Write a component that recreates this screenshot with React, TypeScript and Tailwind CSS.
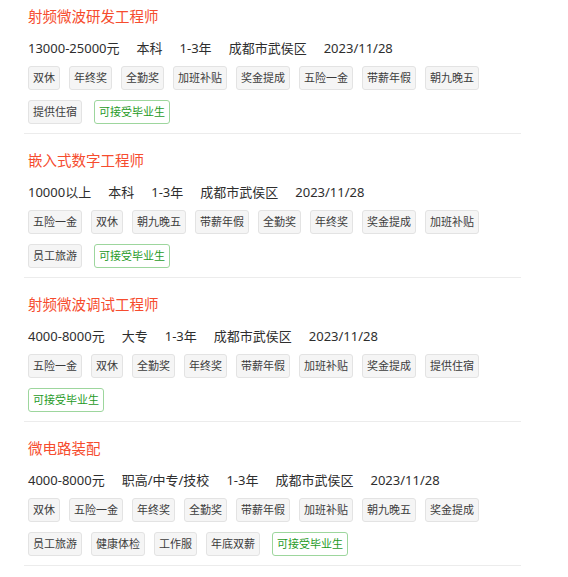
import React from "react";

type Job = {
  title: string;
  info: string[];
  tags: string[];
};

const jobs: Job[] = [
  {
    title: "射频微波研发工程师",
    info: ["13000-25000元", "本科", "1-3年", "成都市武侯区", "2023/11/28"],
    tags: ["双休", "年终奖", "全勤奖", "加班补贴", "奖金提成", "五险一金", "带薪年假", "朝九晚五", "提供住宿"],
  },
  {
    title: "嵌入式数字工程师",
    info: ["10000以上", "本科", "1-3年", "成都市武侯区", "2023/11/28"],
    tags: ["五险一金", "双休", "朝九晚五", "带薪年假", "全勤奖", "年终奖", "奖金提成", "加班补贴", "员工旅游"],
  },
  {
    title: "射频微波调试工程师",
    info: ["4000-8000元", "大专", "1-3年", "成都市武侯区", "2023/11/28"],
    tags: ["五险一金", "双休", "全勤奖", "年终奖", "带薪年假", "加班补贴", "奖金提成", "提供住宿"],
  },
  {
    title: "微电路装配",
    info: ["4000-8000元", "职高/中专/技校", "1-3年", "成都市武侯区", "2023/11/28"],
    tags: ["双休", "五险一金", "年终奖", "全勤奖", "带薪年假", "加班补贴", "朝九晚五", "奖金提成", "员工旅游", "健康体检", "工作服", "年底双薪"],
  },
];

export default function App() {
  return (
    <div
      className="min-h-[577px] w-[568px] bg-white"
      style={{ fontFamily: '"Noto Sans", "Noto Sans CJK SC", sans-serif' }}
    >
      <div className="ml-[24px] w-[497px] -mt-[10px]">
        {jobs.map((job, i) => (
          <div key={i} className="border-b border-[#ececec] pl-[4px] pt-[15px] pb-[9px]">
            <div className="h-[22px] text-[14.5px] leading-[22px] text-[#f64c2e]">{job.title}</div>
            <div className="mt-[11px] flex h-[20px] gap-[17px] text-[13px] leading-[20px] text-[#2e2e2e]">
              {job.info.map((t, j) => (
                <span key={j}>{t}</span>
              ))}
            </div>
            <div className="mt-[8px] flex flex-wrap gap-x-[9px] gap-y-[10px]">
              {job.tags.map((t, j) => (
                <span
                  key={j}
                  className="h-[24px] rounded-[3px] border border-[#e3e3e3] bg-[#f5f5f5] px-[4px] text-[11px] leading-[22px] text-[#3c3c3c] last-of-type:mr-[3px]"
                >
                  {t}
                </span>
              ))}
              <em className="h-[24px] rounded-[3px] border border-[#9dd69d] bg-white px-[4px] text-[11px] not-italic leading-[22px] text-[#1f9a1f]">
                可接受毕业生
              </em>
            </div>
          </div>
        ))}
      </div>
    </div>
  );
}
